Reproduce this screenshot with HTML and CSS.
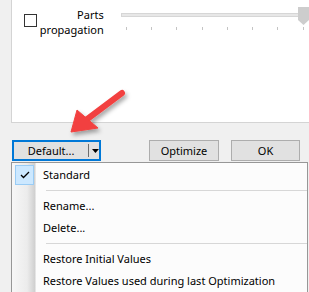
FILE: index.html
```html
<!DOCTYPE html>
<html lang="en">
<head>
  <meta charset="UTF-8">
  <title>Parts propagation</title>
  <link rel="stylesheet" href="styles.css">
</head>
<body>
  <div class="dialog">
    <div class="panel">
      <div class="row">
        <span class="check"></span>
        <div class="label">Parts<br>propagation</div>
        <div class="slider">
          <div class="track"></div>
          <svg class="thumb" width="11" height="18" viewBox="0 0 11 18">
            <path d="M0 0 H11 V13 L5.5 18 L0 13 Z" fill="#cdcdcd"/>
          </svg>
          <div class="ticks">
            <i></i><i></i><i></i><i></i><i></i><i></i><i></i><i></i>
          </div>
        </div>
      </div>
    </div>

    <div class="buttons">
      <div class="split">
        <span class="split-main">Default...</span>
        <span class="split-sep"></span>
        <svg class="split-arrow" width="7" height="4" viewBox="0 0 7 4">
          <path d="M0 0 H7 L3.5 4 Z" fill="#000"/>
        </svg>
      </div>
      <button class="btn btn-optimize">Optimize</button>
      <button class="btn btn-ok">OK</button>
    </div>

    <div class="menu">
      <div class="item checked">
        <span class="tick">
          <svg width="10" height="8" viewBox="0 0 10 8">
            <path d="M1 4 L3.5 6.5 L9 1" fill="none" stroke="#000" stroke-width="1.3"/>
          </svg>
        </span>
        Standard
      </div>
      <div class="sep"></div>
      <div class="item">Rename...</div>
      <div class="item">Delete...</div>
      <div class="sep"></div>
      <div class="item">Restore Initial Values</div>
      <div class="item">Restore Values used during last Optimization</div>
    </div>

    <svg class="arrow" width="309" height="292" viewBox="0 0 309 292">
      <defs>
        <filter id="shadow" x="-20%" y="-20%" width="160%" height="160%">
          <feDropShadow dx="2" dy="3" stdDeviation="2" flood-color="#000" flood-opacity="0.35"/>
        </filter>
      </defs>
      <g filter="url(#shadow)" fill="#f2413f" stroke="#f2413f">
        <line x1="122" y1="93" x2="86" y2="120" stroke-width="6" stroke-linecap="round"/>
        <path d="M71 132 L77 110 L98 128 Z" stroke-width="1" stroke-linejoin="round"/>
      </g>
    </svg>
  </div>
</body>
</html>
```

FILE: styles.css
```css
body {
  margin: 0;
  background: #f0f0f0;
  font-family: "Noto Sans", "Liberation Sans", sans-serif;
  font-size: 11px;
  color: #000;
}
.dialog {
  position: relative;
  width: 309px;
  height: 292px;
  overflow: hidden;
}
.panel {
  margin-left: 11px;
  height: 123px;
  box-sizing: border-box;
  background: #fff;
  border-left: 1px solid #d4d4d4;
  border-bottom: 1px solid #d4d4d4;
}
.row {
  display: flex;
  align-items: flex-start;
}
.check {
  margin: 14px 0 0 12px;
  width: 13px;
  height: 13px;
  box-sizing: border-box;
  border: 1px solid #333;
  background: #fff;
}
.label {
  margin: 7px 0 0 0;
  width: 67px;
  text-align: right;
  line-height: 15px;
}
.slider {
  position: relative;
  margin: 7px 0 0 17px;
  width: 189px;
  height: 24px;
}
.track {
  margin-top: 6px;
  height: 4px;
  box-sizing: border-box;
  background: #e7e7e7;
  border: 1px solid #d6d6d6;
}
.thumb {
  position: absolute;
  left: 177px;
  top: 0;
}
.ticks {
  display: flex;
  justify-content: space-between;
  margin: 10px 0 0 5px;
  width: 178px;
}
.ticks i {
  width: 1px;
  height: 3px;
  background: #c4c4c4;
}
.buttons {
  display: flex;
  margin-top: 17px;
  height: 21px;
}
.split {
  margin-left: 12px;
  width: 89px;
  box-sizing: border-box;
  border: 2px solid #0078d7;
  background: #e1e1e1;
  display: flex;
  align-items: center;
}
.split-main {
  width: 75px;
  text-align: center;
}
.split-sep {
  width: 1px;
  height: 13px;
  background: #6d6d6d;
}
.split-arrow {
  margin-left: 3px;
}
.btn {
  height: 21px;
  box-sizing: border-box;
  border: 1px solid #adadad;
  background: #e1e1e1;
  font: inherit;
  color: #000;
  padding: 0;
}
.btn-optimize {
  margin-left: 48px;
  width: 70px;
}
.btn-ok {
  margin-left: 12px;
  width: 69px;
}
.menu {
  margin: 1px 0 0 11px;
  width: 297px;
  box-sizing: border-box;
  border: 1px solid #979797;
  padding: 1px 0 0;
  background: linear-gradient(to right, #f7f7f7 0, #ececec 15px, #cfcfcf 23px, #fcfcfc 24px, #fcfcfc 100%);
}
.item {
  position: relative;
  height: 22px;
  line-height: 22px;
  padding-left: 31px;
  white-space: nowrap;
}
.tick {
  position: absolute;
  left: 3px;
  top: 1px;
  width: 19px;
  height: 20px;
  box-sizing: border-box;
  background: #cce8ff;
  border: 1px solid #99ccf5;
  display: flex;
  align-items: center;
  justify-content: center;
}
.sep {
  height: 9px;
  margin-left: 34px;
  background: linear-gradient(#d7d7d7, #d7d7d7) 0 4px / 100% 1px no-repeat;
}
.arrow {
  position: absolute;
  left: 0;
  top: 0;
  pointer-events: none;
}
```
